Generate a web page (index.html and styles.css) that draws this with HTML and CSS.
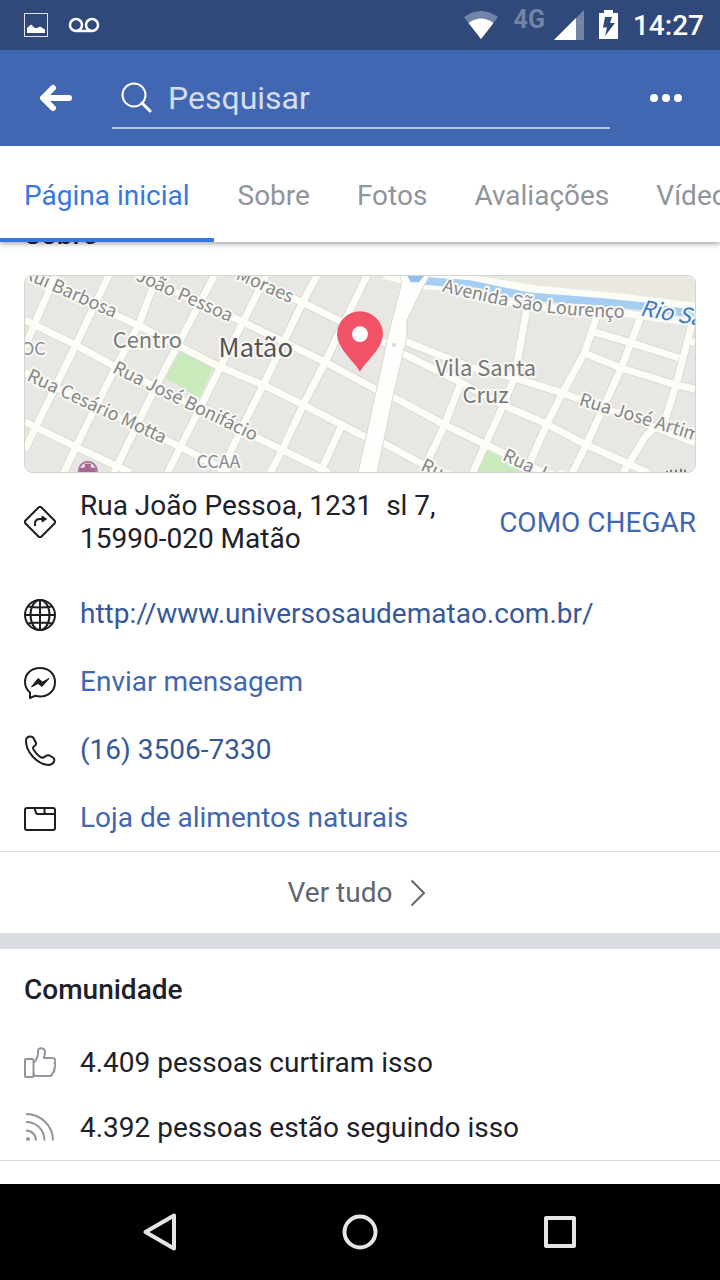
FILE: index.html
```html
<!DOCTYPE html>
<html lang="pt-BR">
  <head>
    <meta charset="UTF-8" />
    <meta name="viewport" content="width=device-width, initial-scale=1.0" />
    <title>Página inicial</title>
    <link rel="stylesheet" href="styles.css">
  </head>
  <body>
    <div class="status-bar">
      <div class="status-left">
        <svg width="24" height="24" viewBox="0 0 24 24">
          <rect x="0.5" y="0.5" width="23" height="23" fill="none" stroke="#dfe3ea" />
          <path d="M3 20v-5l4-3.500 4 3.500h2l3-1.500 5 3V20z" fill="#fff" />
        </svg>
        <svg width="32" height="16" viewBox="0 0 32 16" fill="none" stroke="#fff" stroke-width="2.500">
          <circle cx="8" cy="8" r="6" />
          <circle cx="24" cy="8" r="6" />
          <path d="M8 14h16" />
        </svg>
      </div>
      <div class="status-right">
        <svg width="36" height="28" viewBox="0 0 36 28">
          <path d="M1 6Q18-6 35 6L18 28z" fill="#7384a6" />
          <path d="M5.500 12Q18 3 30.500 12L18 28z" fill="#fff" />
        </svg>
        <span class="network">4G</span>
        <svg width="30" height="30" viewBox="0 0 30 30">
          <path d="M0 30L30 0V30z" fill="#7384a6" />
          <path d="M0 30L22 8V30z" fill="#fff" />
        </svg>
        <svg width="19" height="30" viewBox="0 0 19 30">
          <path d="M0 3h5V0h9v3h5v26H0z" fill="#fff" />
          <path d="M6 7h7l-2 6h5L6 26l2-8.500H4z" fill="#31487a" />
        </svg>
        <span class="clock">14:27</span>
      </div>
    </div>

    <header class="header">
      <button class="icon-button" aria-label="Voltar">
        <svg width="32" height="28" viewBox="0 0 32 28" fill="none" stroke="#fff" stroke-width="6" stroke-linecap="round" stroke-linejoin="round">
          <path d="M13 4L3 14l10 10M4 14h25" />
        </svg>
      </button>
      <label class="search">
        <svg width="32" height="32" viewBox="0 0 32 32" fill="none" stroke="#fff" stroke-width="2">
          <circle cx="14" cy="14" r="11.500" />
          <path d="M22 22l8 8" stroke-width="3" stroke-linecap="round" />
        </svg>
        <input type="text" placeholder="Pesquisar" aria-label="Pesquisar" />
      </label>
      <button class="icon-button" aria-label="Mais">
        <svg width="32" height="8" viewBox="0 0 32 8" fill="#fff">
          <circle cx="4" cy="4" r="4" />
          <circle cx="16" cy="4" r="4" />
          <circle cx="28" cy="4" r="4" />
        </svg>
      </button>
    </header>

    <nav class="tabs">
      <a class="tab active" href="#">Página inicial</a>
      <a class="tab" href="#">Sobre</a>
      <a class="tab" href="#">Fotos</a>
      <a class="tab" href="#">Avaliações</a>
      <a class="tab" href="#">Vídeos</a>
    </nav>

    <main class="content">
      <section class="about">
        <h2 class="about-title">Sobre</h2>
        <svg class="map" viewBox="0 0 672 198" preserveAspectRatio="xMidYMid slice" role="img" aria-label="Mapa de Matão">
          <defs>
            <path id="avenida" d="M418 16Q460 27 500 34T606 43" />
          </defs>
          <rect width="672" height="198" fill="#e8e7e3" />
          <path d="M400 0H672V26L513 12 446 2z" fill="#ebe8e0" />
          <!-- parks -->
          <path d="M156 75l34 15-15 33-34-20z" fill="#c9ebbb" />
          <path d="M463 176l50 22h-60z" fill="#c9ebbb" />
          <!-- street outlines, then streets -->
          <g fill="none" stroke-linejoin="round">
            <g stroke="#dcdad3" stroke-width="9">
              <path d="M31 0L9 50 0 72M84 0L51 70 11 152 0 175M133 0L113 52 91 92 51 172 39 198M190 0L168 42 131 112 89 198M242 0L226 32 196 92 156 172 143 198M293 0L278 28 239 110 219 150 196 198M343 0L301 87 279 130 258 175 246 198M318 150L296 198" />
              <path d="M0-2L113 50 196 92 239 110 279 130 318 150 341 162 359 168 396 188 420 200M113 0L219 47 301 87 353 115 369 122 421 150 446 162 500 188 520 198M212 0L278 27 316 46 362 68M0 45L51 70 91 92 131 112 233 163 258 175 305 198M0 98L156 172 205 198M0 147L51 172 106 198" />
              <path d="M378 65L446 92 491 103 539 118 600 140 672 168M374 76L436 107 481 131 523 149 563 170 603 188 625 198M504 30L491 102 479 132 463 167 449 198M437 108L421 150 400 194M574 40L561 78 539 118 523 150 502 198M619 38L598 93 579 135 563 170 549 198M670 45L653 110 643 142 622 162 600 198M571 57L609 68 656 83M561 78L598 93 653 110 672 114M664 65L672 68" />
            </g>
            <g stroke="#fdfdf8" stroke-width="7">
              <path d="M31 0L9 50 0 72M84 0L51 70 11 152 0 175M133 0L113 52 91 92 51 172 39 198M190 0L168 42 131 112 89 198M242 0L226 32 196 92 156 172 143 198M293 0L278 28 239 110 219 150 196 198M343 0L301 87 279 130 258 175 246 198M318 150L296 198" />
              <path d="M0-2L113 50 196 92 239 110 279 130 318 150 341 162 359 168 396 188 420 200M113 0L219 47 301 87 353 115 369 122 421 150 446 162 500 188 520 198M212 0L278 27 316 46 362 68M0 45L51 70 91 92 131 112 233 163 258 175 305 198M0 98L156 172 205 198M0 147L51 172 106 198" />
              <path d="M378 65L446 92 491 103 539 118 600 140 672 168M374 76L436 107 481 131 523 149 563 170 603 188 625 198M504 30L491 102 479 132 463 167 449 198M437 108L421 150 400 194M574 40L561 78 539 118 523 150 502 198M619 38L598 93 579 135 563 170 549 198M670 45L653 110 643 142 622 162 600 198M571 57L609 68 656 83M561 78L598 93 653 110 672 114M664 65L672 68" />
              <path d="M392 10L446 13 496 30 600 38 672 48" />
              <path d="M360 0L380 5 446 3 513 14 590 21 672 31" />
            </g>
            <!-- river -->
            <path d="M392 5L446 9 503 21 580 27 620 31 672 39" stroke="#a6cdf2" stroke-width="8" />
          </g>
          <path d="M376 0L378 8 365 57 353 113 334 198H353L369 122 383 62 383 45 397 16 406 0z" fill="#fefefd" stroke="#dcdad3" />
          <path d="M383 0h18l-6 7h-8z" fill="#8fc0ef" />
          <circle cx="370" cy="70" r="2" fill="#d8d8d8" />
          <g class="street-label">
            <text transform="translate(89 43) rotate(24)" text-anchor="end">Rui Barbosa</text>
            <text transform="translate(205 47) rotate(24)" text-anchor="end">João Pessoa</text>
            <text transform="translate(266 28) rotate(24)" text-anchor="end">Moraes</text>
            <text transform="translate(1 105) rotate(25)">Rua Cesário Motta</text>
            <text transform="translate(87 97) rotate(26)">Rua José Bonifácio</text>
            <text><textPath href="#avenida">Avenida São Lourenço</textPath></text>
            <text transform="translate(555 130) rotate(17)">Rua José Artimonte</text>
            <text transform="translate(478 185) rotate(25)">Rua João</text>
            <text transform="translate(396 195) rotate(25)">Rua</text>
          </g>
          <g class="place-label">
            <text x="88" y="73">Centro</text>
            <text x="462" y="101" text-anchor="middle">Vila Santa</text>
            <text x="462" y="128" text-anchor="middle">Cruz</text>
          </g>
          <text class="city-label" x="194" y="82">Matão</text>
          <g class="poi-label">
            <text x="-4" y="80">OC</text>
            <text x="172" y="193">CCAA</text>
          </g>
          <text class="river-label" transform="translate(616 40) rotate(10)">Rio São</text>
          <circle cx="63" cy="196" r="9" fill="#ecdfe8" stroke="#a8799a" stroke-width="2" />
          <path d="M60 189h6v4h5v5H55v-5h5z" fill="#a8658f" />
          <path d="M644 196v2M648 195v3M653 195v3M658 194v4M662 195v3" stroke="#777" stroke-width="2" />
          <!-- pin -->
          <path d="M336 97C332 88 313 74 313 59a23 23 0 0 1 46 0C359 74 340 88 336 97z" fill="#f25268" />
          <circle cx="336" cy="59" r="8" fill="#fff" />
        </svg>

        <div class="row address">
          <svg class="icon" viewBox="0 0 32 32">
            <path d="M14.500 1.500Q16 0 17.500 1.500L30.500 14.500Q32 16 30.500 17.500L17.500 30.500Q16 32 14.500 30.500L1.500 17.500Q0 16 1.500 14.500z" />
            <path d="M11 20v-2.500Q11 13 16 13h3" stroke-width="2" />
            <path d="M18 10l4.500 3-4.500 3z" fill="#1c1e21" stroke-width="1" />
          </svg>
          <p class="address-text">Rua João Pessoa, 1231 &nbsp;sl 7,<br>15990-020 Matão</p>
          <a class="directions" href="#">COMO CHEGAR</a>
        </div>
        <div class="row contact">
          <svg class="icon" viewBox="0 0 32 32">
            <circle cx="16" cy="16" r="15" />
            <ellipse cx="16" cy="16" rx="9.500" ry="15" />
            <path d="M16 1v30M1 16h30M4 7.500Q16 9.500 28 7.500M4 24.500Q16 22.500 28 24.500" />
          </svg>
          <a class="dark-link" href="#">http://www.universosaudematao.com.br/</a>
        </div>
        <div class="row contact">
          <svg class="icon" viewBox="0 0 32 32">
            <path d="M16 1C7 1 1 7 1 15c0 5 2 8 5 10.500V31l5-2.200C25 32 31 23 31 15 31 7 25 1 16 1z" />
            <path d="M7.500 20L14 11.500l4.500 3.500 6.500-3.500-7 8-4-3z" fill="#1c1e21" stroke-width="1" />
          </svg>
          <a class="link" href="#">Enviar mensagem</a>
        </div>
        <div class="row contact">
          <svg class="icon" viewBox="0 0 32 32">
            <path d="M2 6C2 3 4 1.500 6.500 1.500Q9 1.500 10 4l2 4Q12.500 9.500 11 10.500C9 12 8.500 12.500 9.500 14.500 12 18.500 14.500 21 17.500 22.500 19 23.500 20 22.500 21 21.500Q23 19.500 25.500 20.500l3.500 2Q31 24 30 26.500 28.500 30 24 30C13 29 2 17 2 6z" />
          </svg>
          <a class="dark-link" href="tel:1635067330">(16) 3506-7330</a>
        </div>
        <div class="row contact">
          <svg class="icon" viewBox="0 0 32 32">
            <path d="M3 5h26q2 0 2 2v18q0 2-2 2H3q-2 0-2-2V7q0-2 2-2zM10.500 5l1.500 5q.5 1 2 1h17M20.500 5v6M20.500 9q0 2 2 2" />
          </svg>
          <a class="link" href="#">Loja de alimentos naturais</a>
        </div>
        <a class="see-all" href="#">
          Ver tudo
          <svg width="16" height="28" viewBox="0 0 16 28" fill="none" stroke="#606770" stroke-width="2">
            <path d="M1.500 1.500L14 14 1.500 26.500" />
          </svg>
        </a>
      </section>

      <section class="community">
        <h2 class="community-title">Comunidade</h2>
        <div class="row stat">
          <svg class="icon" viewBox="0 0 32 32">
            <rect x="1" y="12" width="8.500" height="18" rx="1" />
            <path d="M9.500 15.500C12 14 13.500 10 14 7V3.500C14 0.500 21 0 21 5.500 21 8 20 9.500 20 11h8c4 0 4 4 2.500 5 1.500 2 1 4.500-.5 5.500 1 2 0 3.500-1.500 4.500 0 2-1 3-3 3H13q-3.500 0-3.500-2" />
          </svg>
          4.409 pessoas curtiram isso
        </div>
        <div class="row stat">
          <svg class="icon" viewBox="0 0 32 32">
            <circle cx="4" cy="27" r="2" fill="#90949c" stroke="none" />
            <path d="M2 18.500c6 0 10 4.500 10 10M2 10c10.500 0 18.500 8 18.500 18.500M2 2c15 0 27 12 27 26.500" />
          </svg>
          4.392 pessoas estão seguindo isso
        </div>
      </section>
    </main>

    <div class="nav-bar">
      <button class="icon-button" aria-label="Voltar">
        <svg width="40" height="40" viewBox="0 0 40 40"><path d="M34 3.500v33L5.500 20z" /></svg>
      </button>
      <button class="icon-button" aria-label="Início">
        <svg width="40" height="40" viewBox="0 0 40 40"><circle cx="20" cy="20" r="15.500" /></svg>
      </button>
      <button class="icon-button" aria-label="Recentes">
        <svg width="40" height="40" viewBox="0 0 40 40"><rect x="6" y="6" width="28" height="28" /></svg>
      </button>
    </div>
  </body>
</html>
```

FILE: styles.css
```css
* {
  box-sizing: border-box;
}
body {
  margin: 0;
  height: 100vh;
  display: flex;
  flex-direction: column;
  font-family: Roboto, sans-serif;
  font-size: 28px;
  line-height: 33px;
  color: #1d2129;
  background: white;
}
a {
  text-decoration: none;
}
svg {
  flex: none;
  display: block;
}
.icon-button {
  padding: 0;
  background: none;
  border: none;
  cursor: pointer;
}

.status-bar {
  display: flex;
  flex: none;
  justify-content: space-between;
  align-items: center;
  height: 50px;
  padding: 0 16px 0 24px;
  background: #31487a;
  color: white;
}
.status-left {
  display: flex;
  align-items: center;
  gap: 20px;
}
.status-right {
  display: flex;
  align-items: center;
  gap: 15px;
}
.network {
  align-self: flex-start;
  margin-right: -6px;
  font-size: 25px;
  line-height: 22px;
  font-weight: 700;
  color: #7384a6;
}
.clock {
  font-weight: 500;
}

.header {
  display: flex;
  flex: none;
  align-items: center;
  gap: 40px;
  height: 96px;
  padding: 0 38px 0 40px;
  background: #4267b2;
}
.search {
  display: flex;
  flex: 1;
  align-items: center;
  gap: 16px;
  height: 62px;
  padding-left: 8px;
  border-bottom: 2px solid #b3c2e0;
}
.search input {
  flex: 1;
  min-width: 0;
  padding: 2px 0 0;
  border: none;
  outline: none;
  background: none;
  font-family: inherit;
  font-size: 32px;
  color: white;
}
.search input::placeholder {
  color: #d5ddee;
  opacity: 1;
}

.tabs {
  position: relative;
  z-index: 1;
  display: flex;
  flex: none;
  height: 96px;
  overflow: hidden;
  background: white;
  box-shadow: 0 1px 6px rgba(0, 0, 0, 0.45);
  clip-path: inset(0 0 -10px 0);
}
.tab {
  flex: none;
  padding: 33px 23px 0 24px;
  color: #90949c;
}
.tab.active {
  padding-right: 24px;
  color: #3578e5;
  border-bottom: 4px solid #3578e5;
}

.content {
  flex: 1;
  min-height: 0;
  overflow: hidden;
  /* scrolled a little, the first title sits under the tabs */
  margin-top: -24px;
}
h2 {
  margin: 0;
  font-size: 28px;
  font-weight: 500;
}
.about {
  padding: 0 24px;
}
.about-title {
  padding-bottom: 24px;
}
.map {
  width: 100%;
  height: 198px;
  border: 1px solid #d4d3cf;
  border-radius: 8px;
}
.map text {
  font-family: "Noto Sans CJK SC", "Noto Sans", sans-serif;
  paint-order: stroke;
  stroke: #f8f8f5;
  stroke-width: 4px;
  stroke-linejoin: round;
}
.street-label {
  font-size: 18px;
  fill: #858585;
}
.place-label {
  font-size: 22px;
  fill: #777;
}
.city-label {
  font-size: 26px;
  fill: #555;
}
.poi-label {
  font-size: 18px;
  fill: #8c8c98;
}
.river-label {
  font-size: 22px;
  font-style: italic;
  fill: #3c78c8;
}

.row {
  display: flex;
  align-items: center;
  gap: 24px;
  height: 68px;
}
.icon {
  width: 32px;
  height: 32px;
  fill: none;
  stroke: #1c1e21;
  stroke-width: 2;
  stroke-linejoin: round;
}
.contact .icon {
  margin-top: 4px;
}
.address {
  height: 98px;
  margin-bottom: 8px;
}
.address-text {
  flex: 1;
  margin: 0;
}
.link,
.directions {
  color: #4267b2;
}
.dark-link {
  color: #365899;
}
.see-all {
  display: flex;
  justify-content: center;
  align-items: center;
  gap: 18px;
  height: 82px;
  margin: 0 -24px;
  padding-right: 6px;
  border-top: 1px solid #dadde1;
  color: #606770;
}

.community {
  padding: 0 24px;
  border-top: 16px solid #dadde1;
}
.community-title {
  padding: 24px 0;
}
.stat {
  height: 65px;
}
.stat .icon {
  stroke: #90949c;
}
.stat:last-child {
  height: 66px;
  margin: 0 -24px;
  padding: 0 24px;
  border-bottom: 1px solid #dadde1;
}

.nav-bar {
  display: flex;
  flex: none;
  justify-content: center;
  align-items: center;
  gap: 160px;
  height: 96px;
  background: black;
}
.nav-bar svg {
  fill: none;
  stroke: #e6e6e6;
  stroke-width: 4;
  stroke-linejoin: round;
}
```
